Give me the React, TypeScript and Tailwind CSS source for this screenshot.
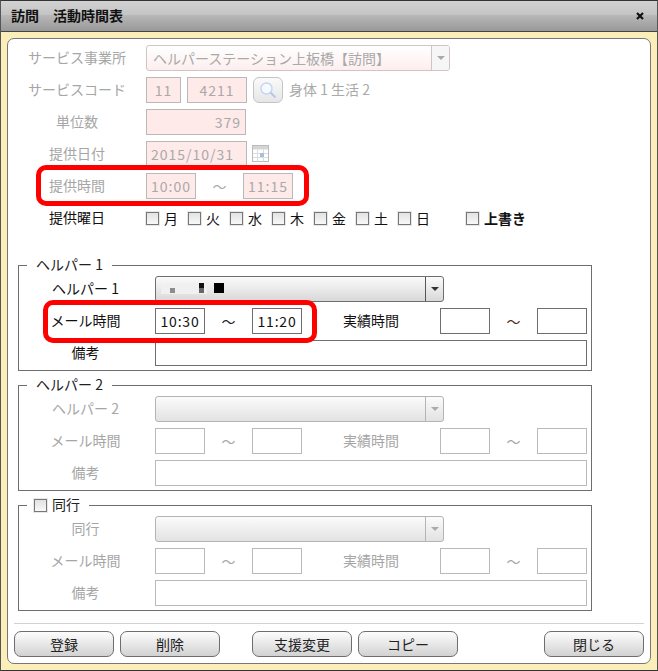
import type { ReactNode } from 'react'

const disabledInput = 'h-[26px] border border-[#b9b9b9] bg-[#ffeaea] text-[#a9a9a9] flex items-center tracking-[1px]'

function Check({ dim = false }: { dim?: boolean }) {
  return (
    <span
      className={`block w-[13px] h-[13px] border ${dim ? 'border-[#888]' : 'border-[#777]'} bg-gradient-to-b from-[#e2e2e2] to-[#f8f8f8] shadow-[0_0_0_1px_#e8e8e8]`}
    />
  )
}

function Day({ label, className = '' }: { label: string; className?: string }) {
  return (
    <div className={`flex items-center gap-[5px] ${className}`}>
      <Check />
      <span className="w-[15px] pb-[1px] text-[#111]">{label}</span>
    </div>
  )
}

function Select({ dim = false }: { dim?: boolean }) {
  return (
    <div
      className={`w-[289px] h-[26px] flex rounded-[3px] border ${dim ? 'border-[#b4b4b4] to-[#e2e2e2]' : 'border-[#6e6e6e] to-[#d8d8d8]'} bg-gradient-to-b from-[#fbfbfb] overflow-hidden`}
    >
      <div className="flex-1 relative">
        {!dim && (
          <svg width="90" height="26" className="absolute left-0 top-0">
            <rect x="5" y="7" width="46" height="10" fill="#f0f0f0" />
            <rect x="14" y="11" width="5" height="5" fill="#8c8c8c" />
            <rect x="43" y="6" width="5" height="5" fill="#111" />
            <rect x="43" y="11" width="5" height="5" fill="#666" />
            <rect x="58" y="6" width="10" height="10" fill="#000" />
          </svg>
        )}
      </div>
      <div className={`w-[18px] flex items-center justify-center border-l ${dim ? 'border-[#b4b4b4]' : 'border-[#555]'}`}>
        <span className={`block w-0 h-0 border-x-[4px] border-x-transparent border-t-[4px] ${dim ? 'border-t-[#aaa]' : 'border-t-[#333]'}`} />
      </div>
    </div>
  )
}

function TimeBox({ value, dim = false }: { value?: string; dim?: boolean }) {
  return (
    <div
      className={`w-[50px] h-[26px] border ${dim ? 'border-[#b9b9b9]' : 'border-[#6e6e6e]'} flex items-center justify-center text-[#111] tracking-[0.8px]`}
    >
      {value}
    </div>
  )
}

function GroupRow({ label, dim, children }: { label: string; dim: boolean; children: ReactNode }) {
  return (
    <div className="flex items-center h-[26px]">
      <div className={`w-[136px] pb-[2px] pr-[3px] text-center ${dim ? 'text-[#a6a6a6]' : 'text-[#111]'}`}>{label}</div>
      {children}
    </div>
  )
}

function Group({
  title,
  label,
  dim,
  from,
  to,
  check = false,
}: {
  title: string
  label: string
  dim: boolean
  from?: string
  to?: string
  check?: boolean
}) {
  const labelColor = dim ? 'text-[#a6a6a6]' : 'text-[#111]'
  return (
    <div className="relative w-[574px] h-[106px] border border-[#6e6e6e] pt-[10px] flex flex-col gap-[6px]">
      <div className="absolute -top-[11px] left-[8px] px-[9px] h-[20px] bg-white flex items-center gap-[5px] text-[#222]">
        {check && <span className="-ml-[2px]"><Check /></span>}
        <span className="pb-[2px]">{title}</span>
      </div>
      <GroupRow label={label} dim={dim}>
        <Select dim={dim} />
      </GroupRow>
      <GroupRow label="メール時間" dim={dim}>
        <TimeBox value={from} dim={dim} />
        <div className={`w-[47px] text-center ${dim ? 'text-[#a6a6a6]' : 'text-[#222]'}`}>～</div>
        <TimeBox value={to} dim={dim} />
        <div className={`w-[138px] pb-[2px] text-center ${labelColor}`}>実績時間</div>
        <TimeBox dim={dim} />
        <div className={`w-[47px] text-center ${dim ? 'text-[#a6a6a6]' : 'text-[#5a2a1a]'}`}>～</div>
        <TimeBox dim={dim} />
      </GroupRow>
      <GroupRow label="備考" dim={dim}>
        <div className={`w-[432px] h-[26px] border ${dim ? 'border-[#b9b9b9]' : 'border-[#6e6e6e]'}`} />
      </GroupRow>
    </div>
  )
}

function FormRow({ label, children }: { label: string; children: ReactNode }) {
  return (
    <div className="flex items-center h-[26px]">
      <div className="w-[138px] pb-[2px] text-center text-[#a6a6a6]">{label}</div>
      {children}
    </div>
  )
}

function Btn({ label, className = '' }: { label: string; className?: string }) {
  return (
    <button className={`w-[100px] h-[26px] rounded-[7px] border border-[#6e6e6e] bg-gradient-to-b from-[#fdfdfd] to-[#d2d2d2] text-[#222] ${className}`}>
      {label}
    </button>
  )
}

export default function App() {
  return (
    <div className="relative w-[658px] h-[671px] flex flex-col overflow-hidden bg-[#fbeeb8] border-x border-b border-t border-t-[#333] border-x-[#555] border-b-[#333] text-[14px] font-['Noto_Sans_CJK_JP','Liberation_Sans',sans-serif] leading-none">
      {/* Title bar */}
      <div className="h-[31px] shrink-0 flex items-center justify-between pl-[10px] pr-[13px] border-b border-[#444] bg-[linear-gradient(#d2d2d2_0,#c4c4c4_45%,#b8b8b8_48%,#989898_100%)]">
        <span className="font-bold text-[14px] text-[#111] pb-[2px]">訪問　活動時間表</span>
        <svg width="8" height="8" viewBox="0 0 8 8">
          <path d="M1 1l6 6M7 1l-6 6" stroke="#111" strokeWidth="2.2" />
        </svg>
      </div>

      <div className="flex-1 mx-[6px] mt-[6px] mb-[6px] rounded-[7px] border border-[#777] bg-white">
        <div className="pt-[6px] flex flex-col gap-[6px]">
          <FormRow label="サービス事業所">
            <div className="w-[304px] h-[26px] flex rounded-[3px] border border-[#d3c4c4] bg-gradient-to-b from-[#fff] to-[#fdeeee] text-[#a9a9a9] overflow-hidden">
              <div className="flex-1 flex items-center pl-[6px] pb-[1px]">ヘルパーステーション上板橋【訪問】</div>
              <div className="w-[18px] flex items-center justify-center border-l border-[#d3c4c4] bg-[#f6f6f6]">
                <span className="block w-0 h-0 border-x-[4px] border-x-transparent border-t-[4px] border-t-[#aaa]" />
              </div>
            </div>
          </FormRow>
          <FormRow label="サービスコード">
            <div className={`${disabledInput} w-[35px] justify-center`}>11</div>
            <div className={`${disabledInput} w-[60px] ml-[6px] justify-center`}>4211</div>
            <div className="ml-[6px] w-[30px] h-[26px] rounded-[6px] border border-[#c4c4c4] bg-gradient-to-b from-[#fafafa] to-[#e6e6e6] flex items-center justify-center">
              <svg width="18" height="18" viewBox="0 0 18 18" fill="none">
                <circle cx="7.5" cy="7.5" r="5.5" stroke="#c3d5f2" strokeWidth="1.4" fill="#f6f9fe" />
                <path d="M11.5 11.5l5 5" stroke="#b4c8ea" strokeWidth="2" />
              </svg>
            </div>
            <span className="ml-[6px] pb-[2px] text-[#a9a9a9]">身体 1 生活 2</span>
          </FormRow>
          <FormRow label="単位数">
            <div className={`${disabledInput} w-[100px] justify-end pr-[4px]`}>379</div>
          </FormRow>
          <FormRow label="提供日付">
            <div className={`${disabledInput} w-[101px] pl-[4px]`}>2015/10/31</div>
            <svg width="18" height="18" viewBox="0 0 18 18" className="ml-[5px]" fill="none">
              <rect x="0.5" y="0.5" width="16" height="16" fill="#fff" stroke="#bbb" />
              <rect x="1" y="1" width="15" height="3.5" fill="#d5d5d5" />
              <path d="M1 8.5h15M1 12.5h15M5.5 4.5v12M11.5 4.5v12" stroke="#d8dee4" />
              <rect x="8" y="8" width="4" height="4" fill="#a8bfd6" />
            </svg>
          </FormRow>
          <FormRow label="提供時間">
            <div className={`${disabledInput} w-[50px] pl-[4px]`}>10:00</div>
            <div className="w-[47px] text-center text-[#a9a9a9]">～</div>
            <div className={`${disabledInput} w-[50px] pl-[4px]`}>11:15</div>
          </FormRow>
          <div className="flex items-center h-[26px]">
            <div className="w-[138px] pb-[2px] text-center text-[#111]">提供曜日</div>
            <Day label="月" className="mr-[9px]" />
            <Day label="火" className="mr-[9px]" />
            <Day label="水" className="mr-[9px]" />
            <Day label="木" className="mr-[9px]" />
            <Day label="金" className="mr-[9px]" />
            <Day label="土" className="mr-[9px]" />
            <Day label="日" className="mr-[35px]" />
            <div className="flex items-center gap-[5px]">
              <Check />
              <span className="font-bold pb-[1px] text-[#111]">上書き</span>
            </div>
          </div>
        </div>

        <div className="ml-[10px] mt-[34px] flex flex-col gap-[14px]">
          <Group title="ヘルパー 1" label="ヘルパー 1" dim={false} from="10:30" to="11:20" />
          <Group title="ヘルパー 2" label="ヘルパー 2" dim />
          <Group title="同行" label="同行" dim check />
        </div>

        <div className="mx-[6px] mt-[12px] pt-[7px] border-t border-[#d2d2d2] flex">
          <Btn label="登録" />
          <Btn label="削除" className="ml-[6px]" />
          <Btn label="支援変更" className="ml-[32px]" />
          <Btn label="コピー" className="ml-[6px]" />
          <Btn label="閉じる" className="ml-auto" />
        </div>
      </div>

      {/* Red annotations drawn over the form */}
      <div className="absolute left-[35px] top-[164px] w-[273px] h-[41px] rounded-[10px] border-[5px] border-[#ff0000]" />
      <div className="absolute left-[42px] top-[299px] w-[274px] h-[43px] rounded-[10px] border-[5px] border-[#ff0000]" />
    </div>
  )
}
